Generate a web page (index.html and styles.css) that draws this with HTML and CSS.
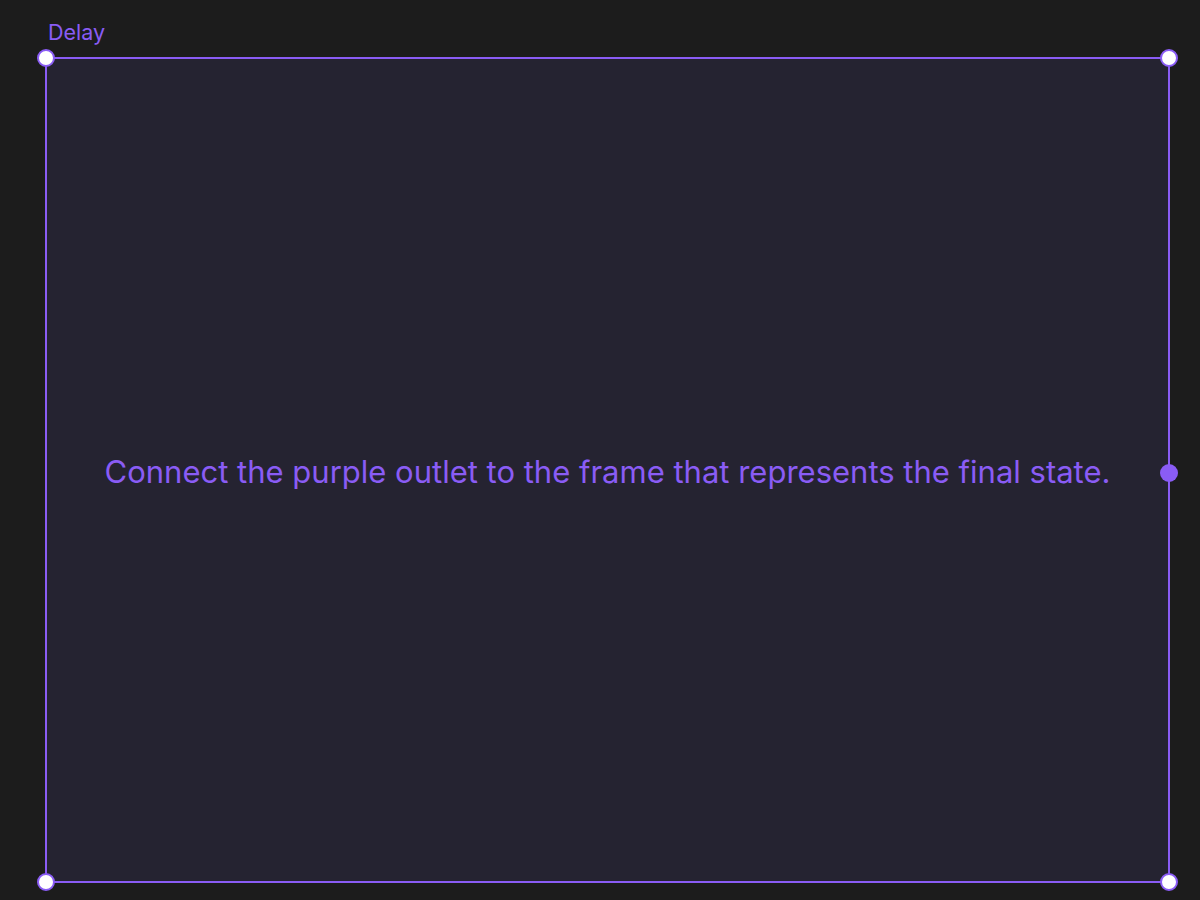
FILE: index.html
```html
<!DOCTYPE html>
<html>
<head>
<meta charset="utf-8">
<link rel="stylesheet" href="styles.css">
</head>
<body>
<div class="canvas">
  <div class="label">Delay</div>
  <div class="frame">
    <p class="message">Connect the purple outlet to the frame that represents the final state.</p>
    <span class="handle tl"></span>
    <span class="handle tr"></span>
    <span class="handle bl"></span>
    <span class="handle br"></span>
    <span class="outlet"></span>
  </div>
</div>
</body>
</html>
```

FILE: styles.css
```css
html, body {
  margin: 0;
  padding: 0;
  background: #1c1c1c;
  width: 1200px;
  height: 900px;
  overflow: hidden;
}
.canvas {
  padding: 18px 0 0 45px;
  font-family: Inter, "Noto Sans", sans-serif;
}
.label {
  color: #8a5cf5;
  font-size: 21.5px;
  line-height: 28px;
  height: 28px;
  padding-left: 3px;
  margin-bottom: 11px;
}
.frame {
  position: relative;
  box-sizing: border-box;
  width: 1125px;
  height: 826px;
  border: 2px solid #8a5cf5;
  background: #252331;
  display: flex;
  align-items: center;
  justify-content: center;
}
.message {
  margin: 0;
  color: #8a5cf5;
  font-size: 31px;
  line-height: 36px;
  padding-top: 4px;
}
.handle {
  position: absolute;
  width: 14px;
  height: 14px;
  border: 2px solid #8a5cf5;
  background: #ffffff;
  border-radius: 50%;
}
.tl { left: -10px; top: -10px; }
.tr { right: -10px; top: -10px; }
.bl { left: -10px; bottom: -10px; }
.br { right: -10px; bottom: -10px; }
.outlet {
  position: absolute;
  width: 18px;
  height: 18px;
  border-radius: 50%;
  background: #8a5cf5;
  right: -10px;
  top: 405px;
}
```
